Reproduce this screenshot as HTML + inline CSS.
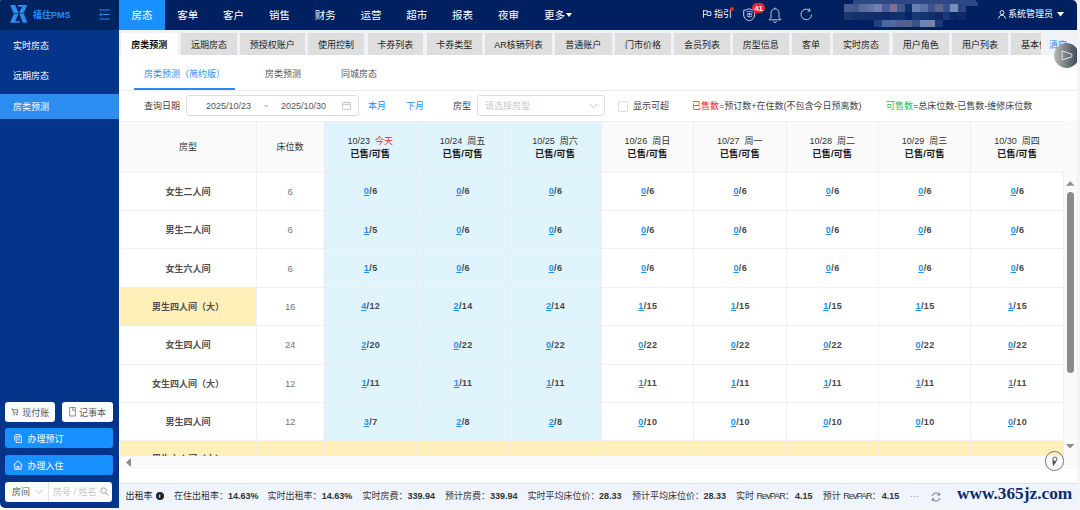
<!DOCTYPE html>
<html lang="zh-CN">
<head>
<meta charset="utf-8">
<title>禧住PMS - 房类预测</title>
<style>
*{box-sizing:border-box;margin:0;padding:0}
html,body{width:1080px;height:510px;overflow:hidden;background:#f4f4f4}
body{font-family:"Liberation Sans","Noto Sans CJK SC",sans-serif;font-size:9px;color:#333;position:relative}
.abs{position:absolute}
#app{position:absolute;left:0;top:0;width:1077px;height:508px;border-radius:1.5px 5px 5px 5px;overflow:hidden;background:#fff}
#side{position:absolute;left:0;top:0;width:119.3px;height:508px;background:#05358a}
#logo{position:absolute;left:0;top:0;width:119px;height:30px;background:#01235f}
#logo .nm{position:absolute;left:33px;top:9.3px;font-size:9px;font-weight:bold;color:#2d8cf0;line-height:13px;white-space:nowrap}
.sitem{position:absolute;left:0;width:119px;height:25px;line-height:26px;padding-left:13px;color:#fff;font-size:9px}
.sitem.on{background:#2d8cf0}
.wbtn{position:absolute;height:20px;background:#fff;border-radius:3px;color:#5a5a5a;font-size:9px;line-height:21px;white-space:nowrap}
.bbtn{position:absolute;left:5px;width:108px;height:20px;background:#1890ff;border-radius:3px;color:#fff;font-size:9px;line-height:21px;white-space:nowrap}
#nav{position:absolute;left:119px;top:0;width:958px;height:30px;background:#00205f}
.nitem{position:absolute;top:0;height:30px;line-height:30px;width:46px;text-align:center;color:#fff;font-size:10.5px;white-space:nowrap}
.nitem.on{background:#1890ff}
#tabs{position:absolute;left:119px;top:30px;width:958px;height:25px;background:#f0f2f7}
.tab{position:absolute;top:3px;height:22px;line-height:25px;background:#dedede;color:#222;font-size:9px;text-align:center;white-space:nowrap;overflow:hidden}
.tab.on{background:#fff;font-weight:bold;color:#111}
.stab{position:absolute;top:67.7px;font-size:9px;line-height:13px;color:#555;white-space:nowrap}
.stab.on{color:#2d8cf0}
.ft{position:absolute;top:100px;line-height:13px;font-size:9px;white-space:nowrap;color:#444}
.box{position:absolute;top:95px;height:21px;border:1px solid #dcdee2;border-radius:3px;background:#fff}
.c{position:absolute;text-align:center;white-space:nowrap}
.ln{position:absolute;background:rgba(236,236,236,0.75)}
.th1{font-size:9px;color:#333;line-height:12px}
.th2{font-size:9.4px;color:#222;font-weight:bold;line-height:12px}
.val{font-size:9px;font-weight:bold;color:#484848;line-height:12px;letter-spacing:0.4px;padding-left:1px}
.val u{color:#1890ff;text-decoration:underline}
.rn{font-size:9px;font-weight:bold;color:#505050;line-height:13px}
.num{font-size:9.6px;color:#777;line-height:12px;letter-spacing:-0.3px}
#status{position:absolute;left:119px;top:483px;width:958px;height:25px;background:#eff4fe;border-top:1px solid #d5e0f5;font-size:9px;color:#333;white-space:nowrap}
#status span{position:absolute;top:6px;line-height:13px}
#status b{color:#333}
</style>
</head>
<body>
<div id="app">

<div id="side">
  <div id="logo">
    <svg class="abs" style="left:10px;top:5.1px" width="17.4" height="17.7" viewBox="0 0 17.4 17.7"><g fill="#2d8cf0"><path d="M0 0H5.18L8.74 8.09L3.8 8.63Z"/><path d="M8.01 0H17.19L13.96 7.53L8.93 8.08L12.01 1.65H8.01Z"/><path d="M3.67 9.31L8.55 8.78L5.42 16.25H9.89V17.66H0Z"/><path d="M9.27 8.7L13.56 8.23L17.43 17.66H12.95Z"/></g></svg>
    <span class="nm">禧住PMS</span>
    <svg class="abs" style="left:99px;top:9px" width="11" height="11" viewBox="0 0 11 11"><g stroke="#2d8cf0" stroke-width="1.2" fill="none"><path d="M0.3 1h10.4M3.4 5.5h7.3M0.3 10h10.4"/></g><path d="M0.2 5.5L2.6 3.6V7.4Z" fill="#2d8cf0"/></svg>
  </div>
  <div class="sitem" style="top:33px">实时房态</div>
  <div class="sitem" style="top:63px">远期房态</div>
  <div class="sitem on" style="top:94px">房类预测</div>

  <div class="wbtn" style="left:5px;top:402px;width:50px">
    <svg class="abs" style="left:6px;top:5.8px" width="8" height="8" viewBox="0 0 9 9"><path d="M0.3 1h1.5l1 4.5h4.2l0.8-3.4H2.2" fill="none" stroke="#666" stroke-width="1"/><circle cx="3.4" cy="7.4" r="0.9" fill="#666"/><circle cx="6.6" cy="7.4" r="0.9" fill="#666"/></svg>
    <span class="abs" style="left:17.3px;top:0.6px">现付账</span></div>
  <div class="wbtn" style="left:62px;top:402px;width:51px">
    <svg class="abs" style="left:7px;top:5px" width="7" height="9.5" viewBox="0 0 7 10"><path d="M0.5 0.5h6v9h-6zM3.8 0.5v3h2.7" fill="none" stroke="#777" stroke-width="0.9"/></svg>
    <span class="abs" style="left:17px;top:0.6px">记事本</span></div>
  <div class="bbtn" style="top:428.2px">
    <svg class="abs" style="left:9px;top:6px" width="8" height="9" viewBox="0 0 9 10"><path d="M2.5 2.5h6v7h-6zM0.8 7.5v-6l1.5-1h4.5v1.8M4 4.5h3M4 6.5h3" fill="none" stroke="#fff" stroke-width="0.9"/></svg>
    <span class="abs" style="left:22.5px;top:1px">办理预订</span></div>
  <div class="bbtn" style="top:454.8px">
    <svg class="abs" style="left:8px;top:5px" width="10" height="10" viewBox="0 0 10 10"><path d="M0.6 5L5 0.8L9.4 5M1.8 4.2V9.3H8.2V4.2M4 9.3V6.5h2V9.3" fill="none" stroke="#fff" stroke-width="0.9"/></svg>
    <span class="abs" style="left:22.5px;top:0.8px">办理入住</span></div>
  <div class="wbtn" style="left:5px;top:482px;width:107px;border-radius:3px">
    <span class="abs" style="left:7px;top:0;color:#555">房间</span>
    <svg class="abs" style="left:30px;top:7px" width="8" height="6" viewBox="0 0 8 6"><path d="M0.8 1L4 4.6L7.2 1" fill="none" stroke="#bbb" stroke-width="0.9"/></svg>
    <div class="abs" style="left:43px;top:0;width:1px;height:20px;background:#e4e4e4"></div>
    <span class="abs" style="left:48px;top:0;color:#c4c4c4">房号 / 姓名</span>
    <svg class="abs" style="left:95px;top:5px" width="9" height="9" viewBox="0 0 9 9"><circle cx="3.6" cy="3.6" r="2.8" fill="none" stroke="#999" stroke-width="0.9"/><path d="M5.7 5.7L8.4 8.4" stroke="#999" stroke-width="1"/></svg>
  </div>
</div>

<div id="nav">
<div class="nitem on" style="left:0.0px">房态</div>
<div class="nitem" style="left:45.8px">客单</div>
<div class="nitem" style="left:91.6px">客户</div>
<div class="nitem" style="left:137.4px">销售</div>
<div class="nitem" style="left:183.2px">财务</div>
<div class="nitem" style="left:229.0px">运营</div>
<div class="nitem" style="left:274.8px">超市</div>
<div class="nitem" style="left:320.6px">报表</div>
<div class="nitem" style="left:366.4px">夜审</div>
<div class="nitem" style="left:412px;width:54px">更多<svg width="6" height="4" viewBox="0 0 6 4" style="margin-left:1px;position:relative;top:-2px"><path d="M0 0H6L3 4Z" fill="#fff"/></svg></div>
<svg class="abs" style="left:584px;top:10px" width="8.5" height="8" viewBox="0 0 9 8"><path d="M0.5 0v8M0.5 0.6h4v4h-4M4.5 1.6h3.8v4H4.5" fill="none" stroke="#fff" stroke-width="0.9"/></svg>
<span class="abs" style="left:595px;top:8px;color:#fff;font-size:9px;line-height:13px">指引</span>
<div class="abs" style="left:611px;top:7px;width:4px;height:4px;border-radius:2px;background:#f5222d"></div>
<svg class="abs" style="left:624.3px;top:7.6px" width="12.4" height="13.6" viewBox="0 0 12.4 13.6"><path d="M0.7 2.3C2.8 2.2 4.6 1.6 6.2 0.7C7.8 1.6 9.6 2.2 11.7 2.3V7C11.7 9.8 9.6 11.8 6.2 13C2.8 11.8 0.7 9.8 0.7 7Z" fill="none" stroke="#d0d6e6" stroke-width="1"/></svg>
<span class="abs" style="left:627px;top:10px;color:#d0d6e6;font-size:7px;line-height:9px">审</span>
<div class="abs" style="left:633px;top:3.4px;width:13.2px;height:10px;border-radius:5px;background:#f5222d;color:#fff;font-size:8px;font-weight:bold;line-height:12.6px;text-align:center;letter-spacing:-0.2px;overflow:hidden">41</div>
<svg class="abs" style="left:649px;top:7px" width="14" height="16" viewBox="0 0 14 16"><path d="M7 0.6v1.2M7 1.8C4.4 1.8 3 3.8 3 6.4V10.6L1 12.8H13L11 10.6V6.4C11 3.8 9.6 1.8 7 1.8ZM5.4 14.2C5.6 15 6.2 15.4 7 15.4S8.4 15 8.6 14.2" fill="none" stroke="#d0d6e6" stroke-width="0.9"/></svg>
<svg class="abs" style="left:681px;top:8px" width="13" height="13" viewBox="0 0 13 13"><path d="M11.6 6.5A5.3 5.3 0 1 1 9.6 2.3M9.2 0.4L10.2 2.8L7.6 3.4" fill="none" stroke="#d0d6e6" stroke-width="0.9"/></svg>

<div class="abs" style="left:0;top:0;width:958px;height:30px;filter:blur(0.6px)">
<div class="abs" style="left:734px;top:-3px;width:125px;height:9px;border-radius:8px 14px 0 0;background:#2e4884"></div>
<div class="abs" style="left:724.9px;top:4.4px;width:7.8px;height:8px;background:#4a5a8c"></div>
<div class="abs" style="left:732.5px;top:4.4px;width:7.8px;height:8px;background:#3e5a8e"></div>
<div class="abs" style="left:740.1px;top:4.4px;width:7.8px;height:8px;background:#5a6c9a"></div>
<div class="abs" style="left:747.7px;top:4.4px;width:7.8px;height:8px;background:#6474a4"></div>
<div class="abs" style="left:755.3px;top:4.4px;width:7.8px;height:8px;background:#7080a8"></div>
<div class="abs" style="left:762.9px;top:4.4px;width:7.8px;height:8px;background:#4a5c9c"></div>
<div class="abs" style="left:770.5px;top:4.4px;width:7.8px;height:8px;background:#7c7098"></div>
<div class="abs" style="left:778.1px;top:4.4px;width:7.8px;height:8px;background:#3e5a8c"></div>
<div class="abs" style="left:785.7px;top:4.4px;width:7.8px;height:8px;background:#10306c"></div>
<div class="abs" style="left:793.3px;top:4.4px;width:7.8px;height:8px;background:#6480b4"></div>
<div class="abs" style="left:800.9px;top:4.4px;width:7.8px;height:8px;background:#5c70a4"></div>
<div class="abs" style="left:808.5px;top:4.4px;width:7.8px;height:8px;background:#3c5290"></div>
<div class="abs" style="left:816.1px;top:4.4px;width:7.8px;height:8px;background:#5c6490"></div>
<div class="abs" style="left:823.7px;top:4.4px;width:7.8px;height:8px;background:#3a5290"></div>
<div class="abs" style="left:831.3px;top:4.4px;width:7.8px;height:8px;background:#7890b8"></div>
<div class="abs" style="left:838.9px;top:4.4px;width:7.8px;height:8px;background:#2c4480"></div>
<div class="abs" style="left:724.9px;top:12.3px;width:7.8px;height:7.8px;background:#1c3470"></div>
<div class="abs" style="left:732.5px;top:12.3px;width:7.8px;height:7.8px;background:#16306c"></div>
<div class="abs" style="left:740.1px;top:12.3px;width:7.8px;height:7.8px;background:#14306c"></div>
<div class="abs" style="left:747.7px;top:12.3px;width:7.8px;height:7.8px;background:#142e6c"></div>
<div class="abs" style="left:755.3px;top:12.3px;width:7.8px;height:7.8px;background:#122c6a"></div>
<div class="abs" style="left:762.9px;top:12.3px;width:7.8px;height:7.8px;background:#0e286a"></div>
<div class="abs" style="left:770.5px;top:12.3px;width:7.8px;height:7.8px;background:#10306c"></div>
<div class="abs" style="left:778.1px;top:12.3px;width:7.8px;height:7.8px;background:#10306e"></div>
<div class="abs" style="left:785.7px;top:12.3px;width:7.8px;height:7.8px;background:#06246a"></div>
<div class="abs" style="left:793.3px;top:12.3px;width:7.8px;height:7.8px;background:#183874"></div>
<div class="abs" style="left:800.9px;top:12.3px;width:7.8px;height:7.8px;background:#143270"></div>
<div class="abs" style="left:808.5px;top:12.3px;width:7.8px;height:7.8px;background:#12306c"></div>
<div class="abs" style="left:816.1px;top:12.3px;width:7.8px;height:7.8px;background:#10286a"></div>
<div class="abs" style="left:823.7px;top:12.3px;width:7.8px;height:7.8px;background:#1a3876"></div>
<div class="abs" style="left:831.3px;top:12.3px;width:7.8px;height:7.8px;background:#0a2868"></div>
<div class="abs" style="left:838.9px;top:12.3px;width:7.8px;height:7.8px;background:#0e2a68"></div>
<div class="abs" style="left:755.3px;top:20px;width:7.8px;height:7.2px;background:#22407c"></div>
<div class="abs" style="left:762.9px;top:20px;width:7.8px;height:7.2px;background:#4c68a0"></div>
<div class="abs" style="left:770.5px;top:20px;width:7.8px;height:7.2px;background:#56689a"></div>
<div class="abs" style="left:778.1px;top:20px;width:7.8px;height:7.2px;background:#4c6096"></div>
<div class="abs" style="left:785.7px;top:20px;width:7.8px;height:7.2px;background:#56608e"></div>
<div class="abs" style="left:793.3px;top:20px;width:7.8px;height:7.2px;background:#3c5088"></div>
<div class="abs" style="left:800.9px;top:20px;width:7.8px;height:7.2px;background:#6488b0"></div>
<div class="abs" style="left:808.5px;top:20px;width:7.8px;height:7.2px;background:#7484ac"></div>
<div class="abs" style="left:816.1px;top:20px;width:7.8px;height:7.2px;background:#1c3872"></div>
</div>
<svg class="abs" style="left:879px;top:10px" width="8" height="9" viewBox="0 0 8 9"><circle cx="4" cy="2.6" r="2" fill="none" stroke="#fff" stroke-width="0.9"/><path d="M0.6 8.6C0.8 6.4 2.2 5.2 4 5.2S7.2 6.4 7.4 8.6" fill="none" stroke="#fff" stroke-width="0.9"/></svg>
<span class="abs" style="left:889px;top:8px;color:#fff;font-size:9px;line-height:13px">系统管理员</span>
<svg class="abs" style="left:937.5px;top:12px" width="7" height="5" viewBox="0 0 7 5"><path d="M0 0H7L3.5 4.6Z" fill="#fff"/></svg>

</div>
<div id="tabs">
<div class="tab on" style="left:2.0px;width:56.5px">房类预测</div>
<div class="tab" style="left:62.0px;width:56.0px">远期房态</div>
<div class="tab" style="left:121.0px;width:64.5px">预授权账户</div>
<div class="tab" style="left:189.0px;width:56.0px">使用控制</div>
<div class="tab" style="left:248.5px;width:55.5px">卡券列表</div>
<div class="tab" style="left:307.5px;width:55.5px">卡券类型</div>
<div class="tab" style="left:366.0px;width:67.0px">AR核销列表</div>
<div class="tab" style="left:436.0px;width:56.5px">普通账户</div>
<div class="tab" style="left:496.0px;width:56.0px">门市价格</div>
<div class="tab" style="left:555.0px;width:56.0px">会员列表</div>
<div class="tab" style="left:613.5px;width:56.5px">房型信息</div>
<div class="tab" style="left:673.0px;width:38.0px">客单</div>
<div class="tab" style="left:714.0px;width:56.0px">实时房态</div>
<div class="tab" style="left:773.5px;width:56.5px">用户角色</div>
<div class="tab" style="left:833.0px;width:56.0px">用户列表</div>
<div class="tab" style="left:892.0px;width:56.0px">基本信息</div>
<div class="abs" style="left:922px;top:0;width:36px;height:25px;background:#f0f2f7"></div>
<span class="abs" style="left:930px;top:8.5px;color:#2d8cf0;font-size:9px;line-height:13px">清空</span>
</div>
<div class="abs" style="left:1054px;top:43px;width:25px;height:25px;border-radius:13px;background:linear-gradient(90deg,#bcbcb7 0%,#8a8e90 35%,#5c6870 68%,#36475c 100%)">
<svg class="abs" style="left:7px;top:7px" width="12" height="11" viewBox="0 0 12 11"><path d="M1 1V10L10.8 6.8V4.2Z" fill="none" stroke="#e4e4e4" stroke-width="1" stroke-linejoin="round"/></svg></div>
<div class="stab on" style="left:144px">房类预测（简约版）</div>
<div class="stab" style="left:265px">房类预测</div>
<div class="stab" style="left:341px">同城房态</div>
<div class="abs" style="left:119px;top:90px;width:958px;height:1px;background:#ececec"></div>
<div class="abs" style="left:134px;top:88px;width:101px;height:2px;background:#2d8cf0"></div>
<span class="ft" style="left:144px">查询日期</span>
<div class="box" style="left:186px;width:172.5px"></div>
<span class="ft" style="left:206px;color:#555">2025/10/23</span>
<span class="ft" style="left:263px;color:#aaa">~</span>
<span class="ft" style="left:281px;color:#555">2025/10/30</span>
<svg class="abs" style="left:342px;top:101px" width="9" height="9" viewBox="0 0 9 9"><path d="M0.6 1.6h7.8v6.8H0.6zM0.6 3.6h7.8M2.6 0.4v2M6.4 0.4v2" fill="none" stroke="#bbb" stroke-width="0.8"/></svg>
<span class="ft" style="left:368px;color:#1890ff">本月</span>
<span class="ft" style="left:406px;color:#1890ff">下月</span>
<span class="ft" style="left:453px">房型</span>
<div class="box" style="left:477px;width:128px"></div>
<span class="ft" style="left:485px;color:#c5c8ce">请选择房型</span>
<svg class="abs" style="left:589px;top:103px" width="9" height="6" viewBox="0 0 9 6"><path d="M0.8 0.8L4.5 4.8L8.2 0.8" fill="none" stroke="#bbb" stroke-width="0.9"/></svg>
<div class="abs" style="left:617.5px;top:101px;width:10.5px;height:10.5px;border:1px solid #dcdee2;border-radius:2px;background:#fff"></div>
<span class="ft" style="left:633px">显示可超</span>
<span class="ft" style="left:692px"><span style="color:#f5222d">已售数</span>=预订数+在住数(不包含今日预离数)</span>
<span class="ft" style="left:886px"><span style="color:#19be6b">可售数</span>=总床位数-已售数-维修床位数</span>
<div class="abs" style="left:120px;top:121px;width:957px;height:51px;background:#fafafa"></div>
<div class="abs" style="left:324px;top:121px;width:277.2px;height:320.5px;background:#e0f4fe"></div>
<div class="abs" style="left:120px;top:287.2px;width:136px;height:38.5px;background:#ffefb9"></div>
<div class="abs" style="left:120px;top:440.8px;width:943.5px;height:15.2px;background:#ffefb9"></div>
<div class="ln" style="left:120px;top:121px;width:943.5px;height:1px"></div>
<div class="ln" style="left:120px;top:171.5px;width:943.5px;height:1px"></div>
<div class="ln" style="left:120px;top:209.9px;width:943.5px;height:1px"></div>
<div class="ln" style="left:120px;top:248.3px;width:943.5px;height:1px"></div>
<div class="ln" style="left:120px;top:286.7px;width:943.5px;height:1px"></div>
<div class="ln" style="left:120px;top:325.1px;width:943.5px;height:1px"></div>
<div class="ln" style="left:120px;top:363.5px;width:943.5px;height:1px"></div>
<div class="ln" style="left:120px;top:401.9px;width:943.5px;height:1px"></div>
<div class="ln" style="left:120px;top:440.3px;width:943.5px;height:1px"></div>
<div class="ln" style="left:255.5px;top:121px;width:1px;height:335px"></div>
<div class="ln" style="left:323.5px;top:121px;width:1px;height:335px"></div>
<div class="ln" style="left:415.9px;top:121px;width:1px;height:335px"></div>
<div class="ln" style="left:508.3px;top:121px;width:1px;height:335px"></div>
<div class="ln" style="left:600.7px;top:121px;width:1px;height:335px"></div>
<div class="ln" style="left:693.1px;top:121px;width:1px;height:335px"></div>
<div class="ln" style="left:785.5px;top:121px;width:1px;height:335px"></div>
<div class="ln" style="left:877.9px;top:121px;width:1px;height:335px"></div>
<div class="ln" style="left:970.3px;top:121px;width:1px;height:335px"></div>
<div class="ln" style="left:1063.0px;top:172px;width:1px;height:284px"></div>
<div class="c th1" style="left:120px;width:136px;top:141px">房型</div>
<div class="c th1" style="left:256px;width:68px;top:141px">床位数</div>
<div class="c th1" style="left:324px;width:92.4px;top:135px">10/23&nbsp;&nbsp;<span style="color:#f5222d">今天</span></div>
<div class="c th2" style="left:324px;width:92.4px;top:148px">已售/可售</div>
<div class="c th1" style="left:416.4px;width:92.4px;top:135px">10/24&nbsp;&nbsp;周五</div>
<div class="c th2" style="left:416.4px;width:92.4px;top:148px">已售/可售</div>
<div class="c th1" style="left:508.8px;width:92.4px;top:135px">10/25&nbsp;&nbsp;周六</div>
<div class="c th2" style="left:508.8px;width:92.4px;top:148px">已售/可售</div>
<div class="c th1" style="left:601.2px;width:92.4px;top:135px">10/26&nbsp;&nbsp;周日</div>
<div class="c th2" style="left:601.2px;width:92.4px;top:148px">已售/可售</div>
<div class="c th1" style="left:693.6px;width:92.4px;top:135px">10/27&nbsp;&nbsp;周一</div>
<div class="c th2" style="left:693.6px;width:92.4px;top:148px">已售/可售</div>
<div class="c th1" style="left:786.0px;width:92.4px;top:135px">10/28&nbsp;&nbsp;周二</div>
<div class="c th2" style="left:786.0px;width:92.4px;top:148px">已售/可售</div>
<div class="c th1" style="left:878.4px;width:92.4px;top:135px">10/29&nbsp;&nbsp;周三</div>
<div class="c th2" style="left:878.4px;width:92.4px;top:148px">已售/可售</div>
<div class="c th1" style="left:970.8px;width:92.4px;top:135px">10/30&nbsp;&nbsp;周四</div>
<div class="c th2" style="left:970.8px;width:92.4px;top:148px">已售/可售</div>
<div class="c rn" style="left:120px;width:136px;top:185.7px">女生二人间</div>
<div class="c num" style="left:256px;width:68px;top:185.7px">6</div>
<div class="c val" style="left:324px;width:92.4px;top:185.2px"><u>0</u>/6</div>
<div class="c val" style="left:416.4px;width:92.4px;top:185.2px"><u>0</u>/6</div>
<div class="c val" style="left:508.8px;width:92.4px;top:185.2px"><u>0</u>/6</div>
<div class="c val" style="left:601.2px;width:92.4px;top:185.2px"><u>0</u>/6</div>
<div class="c val" style="left:693.6px;width:92.4px;top:185.2px"><u>0</u>/6</div>
<div class="c val" style="left:786.0px;width:92.4px;top:185.2px"><u>0</u>/6</div>
<div class="c val" style="left:878.4px;width:92.4px;top:185.2px"><u>0</u>/6</div>
<div class="c val" style="left:970.8px;width:92.4px;top:185.2px"><u>0</u>/6</div>
<div class="c rn" style="left:120px;width:136px;top:224.1px">男生二人间</div>
<div class="c num" style="left:256px;width:68px;top:224.1px">6</div>
<div class="c val" style="left:324px;width:92.4px;top:223.6px"><u>1</u>/5</div>
<div class="c val" style="left:416.4px;width:92.4px;top:223.6px"><u>0</u>/6</div>
<div class="c val" style="left:508.8px;width:92.4px;top:223.6px"><u>0</u>/6</div>
<div class="c val" style="left:601.2px;width:92.4px;top:223.6px"><u>0</u>/6</div>
<div class="c val" style="left:693.6px;width:92.4px;top:223.6px"><u>0</u>/6</div>
<div class="c val" style="left:786.0px;width:92.4px;top:223.6px"><u>0</u>/6</div>
<div class="c val" style="left:878.4px;width:92.4px;top:223.6px"><u>0</u>/6</div>
<div class="c val" style="left:970.8px;width:92.4px;top:223.6px"><u>0</u>/6</div>
<div class="c rn" style="left:120px;width:136px;top:262.5px">女生六人间</div>
<div class="c num" style="left:256px;width:68px;top:262.5px">6</div>
<div class="c val" style="left:324px;width:92.4px;top:262.0px"><u>1</u>/5</div>
<div class="c val" style="left:416.4px;width:92.4px;top:262.0px"><u>0</u>/6</div>
<div class="c val" style="left:508.8px;width:92.4px;top:262.0px"><u>0</u>/6</div>
<div class="c val" style="left:601.2px;width:92.4px;top:262.0px"><u>0</u>/6</div>
<div class="c val" style="left:693.6px;width:92.4px;top:262.0px"><u>0</u>/6</div>
<div class="c val" style="left:786.0px;width:92.4px;top:262.0px"><u>0</u>/6</div>
<div class="c val" style="left:878.4px;width:92.4px;top:262.0px"><u>0</u>/6</div>
<div class="c val" style="left:970.8px;width:92.4px;top:262.0px"><u>0</u>/6</div>
<div class="c rn" style="left:120px;width:136px;top:300.9px">男生四人间（大）</div>
<div class="c num" style="left:256px;width:68px;top:300.9px">16</div>
<div class="c val" style="left:324px;width:92.4px;top:300.4px"><u>4</u>/12</div>
<div class="c val" style="left:416.4px;width:92.4px;top:300.4px"><u>2</u>/14</div>
<div class="c val" style="left:508.8px;width:92.4px;top:300.4px"><u>2</u>/14</div>
<div class="c val" style="left:601.2px;width:92.4px;top:300.4px"><u>1</u>/15</div>
<div class="c val" style="left:693.6px;width:92.4px;top:300.4px"><u>1</u>/15</div>
<div class="c val" style="left:786.0px;width:92.4px;top:300.4px"><u>1</u>/15</div>
<div class="c val" style="left:878.4px;width:92.4px;top:300.4px"><u>1</u>/15</div>
<div class="c val" style="left:970.8px;width:92.4px;top:300.4px"><u>1</u>/15</div>
<div class="c rn" style="left:120px;width:136px;top:339.3px">女生四人间</div>
<div class="c num" style="left:256px;width:68px;top:339.3px">24</div>
<div class="c val" style="left:324px;width:92.4px;top:338.8px"><u>2</u>/20</div>
<div class="c val" style="left:416.4px;width:92.4px;top:338.8px"><u>0</u>/22</div>
<div class="c val" style="left:508.8px;width:92.4px;top:338.8px"><u>0</u>/22</div>
<div class="c val" style="left:601.2px;width:92.4px;top:338.8px"><u>0</u>/22</div>
<div class="c val" style="left:693.6px;width:92.4px;top:338.8px"><u>0</u>/22</div>
<div class="c val" style="left:786.0px;width:92.4px;top:338.8px"><u>0</u>/22</div>
<div class="c val" style="left:878.4px;width:92.4px;top:338.8px"><u>0</u>/22</div>
<div class="c val" style="left:970.8px;width:92.4px;top:338.8px"><u>0</u>/22</div>
<div class="c rn" style="left:120px;width:136px;top:377.7px">女生四人间（大）</div>
<div class="c num" style="left:256px;width:68px;top:377.7px">12</div>
<div class="c val" style="left:324px;width:92.4px;top:377.2px"><u>1</u>/11</div>
<div class="c val" style="left:416.4px;width:92.4px;top:377.2px"><u>1</u>/11</div>
<div class="c val" style="left:508.8px;width:92.4px;top:377.2px"><u>1</u>/11</div>
<div class="c val" style="left:601.2px;width:92.4px;top:377.2px"><u>1</u>/11</div>
<div class="c val" style="left:693.6px;width:92.4px;top:377.2px"><u>1</u>/11</div>
<div class="c val" style="left:786.0px;width:92.4px;top:377.2px"><u>1</u>/11</div>
<div class="c val" style="left:878.4px;width:92.4px;top:377.2px"><u>1</u>/11</div>
<div class="c val" style="left:970.8px;width:92.4px;top:377.2px"><u>1</u>/11</div>
<div class="c rn" style="left:120px;width:136px;top:416.1px">男生四人间</div>
<div class="c num" style="left:256px;width:68px;top:416.1px">12</div>
<div class="c val" style="left:324px;width:92.4px;top:415.6px"><u>3</u>/7</div>
<div class="c val" style="left:416.4px;width:92.4px;top:415.6px"><u>2</u>/8</div>
<div class="c val" style="left:508.8px;width:92.4px;top:415.6px"><u>2</u>/8</div>
<div class="c val" style="left:601.2px;width:92.4px;top:415.6px"><u>0</u>/10</div>
<div class="c val" style="left:693.6px;width:92.4px;top:415.6px"><u>0</u>/10</div>
<div class="c val" style="left:786.0px;width:92.4px;top:415.6px"><u>0</u>/10</div>
<div class="c val" style="left:878.4px;width:92.4px;top:415.6px"><u>0</u>/10</div>
<div class="c val" style="left:970.8px;width:92.4px;top:415.6px"><u>0</u>/10</div>
<div class="abs" style="left:120px;top:440.8px;width:136px;height:15.2px;overflow:hidden"><div class="c rn" style="left:0;width:136px;top:12.5px">男生六人间（大）</div></div>
<div class="abs" style="left:1064px;top:172px;width:13px;height:284px;background:#fafafa"></div>
<div class="abs" style="left:1066.5px;top:192px;width:7.5px;height:181px;border-radius:4px;background:#8b8b8b"></div>
<svg class="abs" style="left:1066px;top:180.5px" width="8.5" height="5" viewBox="0 0 9 5"><path d="M0 5L4.5 0L9 5Z" fill="#8b8b8b"/></svg>
<svg class="abs" style="left:1066px;top:443.8px" width="8.2" height="4.5" viewBox="0 0 9 5"><path d="M0 0L4.5 5L9 0Z" fill="#8b8b8b"/></svg>
<div class="abs" style="left:120px;top:456px;width:957px;height:13px;background:#fafafa"></div>
<svg class="abs" style="left:126px;top:458px" width="5" height="9" viewBox="0 0 5 9"><path d="M5 0L0 4.5L5 9Z" fill="#8b8b8b"/></svg>
<div class="abs" style="left:1044.8px;top:451.2px;width:19.4px;height:19.4px;border-radius:10px;border:1px solid #777">
<svg class="abs" style="left:4px;top:4px" width="9" height="11" viewBox="0 0 9 11"><circle cx="4.9" cy="3.2" r="2.1" fill="#fff" stroke="#555" stroke-width="1"/><path d="M2.2 4.4L3.2 10.2L6.6 5.4Z" fill="#555"/></svg></div>
<div id="status">
<span style="left:6.5px;color:#222">出租率</span>
<div class="abs" style="left:36.5px;top:8px;width:8px;height:8px;border-radius:4px;background:#222;color:#fff;font-size:6px;font-weight:bold;line-height:8px;text-align:center">i</div>
<span style="left:55.0px">在住出租率：</span><span style="left:108.9px"><b>14.63%</b></span>
<span style="left:148.4px">实时出租率：</span><span style="left:202.7px"><b>14.63%</b></span>
<span style="left:243.5px">实时房费：</span><span style="left:288.5px"><b>339.94</b></span>
<span style="left:326.0px">预计房费：</span><span style="left:371.0px"><b>339.94</b></span>
<span style="left:408.5px">实时平均床位价：</span><span style="left:480.0px"><b>28.33</b></span>
<span style="left:513.0px">预计平均床位价：</span><span style="left:584.5px"><b>28.33</b></span>
<span style="left:617.0px">实时 <i style="font-style:normal;letter-spacing:-0.9px">RevPAR</i>：</span><span style="left:676.0px"><b>4.15</b></span>
<span style="left:703.7px">预计 <i style="font-style:normal;letter-spacing:-0.9px">RevPAR</i>：</span><span style="left:762.8px"><b>4.15</b></span>
<span style="left:791px;color:#888;letter-spacing:0px">···</span>
<svg class="abs" style="left:811.5px;top:8px" width="10" height="10" viewBox="0 0 9 9"><path d="M1 3.6A3.6 3.6 0 0 1 7.6 2.6M8 5.4A3.6 3.6 0 0 1 1.4 6.4M7.8 0.8V2.8H5.8M1.2 8.2V6.2H3.2" fill="none" stroke="#666" stroke-width="0.8"/></svg>
<span style="left:838px;top:-1px;font-family:'Liberation Serif',serif;font-weight:bold;font-size:17.3px;line-height:22px;color:#0c2c6c">www.365jz.com</span>
</div>
</div>
</body>
</html>
